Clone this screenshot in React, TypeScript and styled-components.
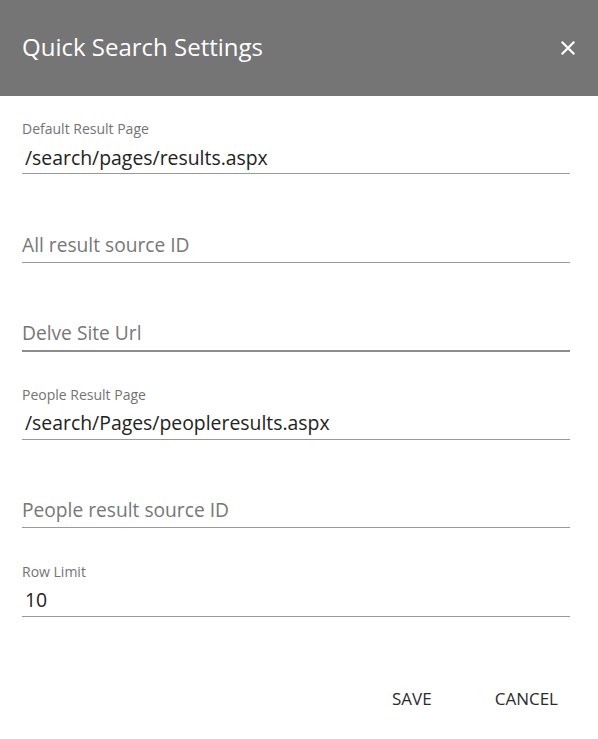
import { FC } from "react";
import styled, { createGlobalStyle } from "styled-components";

const GlobalStyle = createGlobalStyle`
  html, body {
    margin: 0;
    padding: 0;
    background: #fff;
  }
  body {
    font-family: "Open Sans", "Liberation Sans", sans-serif;
  }
`

const Dialog = styled.div`
  width: 598px;
  height: 739px;
  display: flex;
  flex-direction: column;
  background: #fff;
`

const Header = styled.div`
  height: 96px;
  flex-shrink: 0;
  background-color: #757575;
  display: flex;
  align-items: center;
  justify-content: space-between;
  padding: 0 20px 0 22px;
  box-sizing: border-box;

  h2 {
    margin: 0;
    font-size: 24px;
    font-weight: 400;
    color: #fff;
    line-height: 1;
    padding-bottom: 2px;
  }
`

const CloseButton = styled.button`
  background: transparent;
  border: none;
  padding: 0;
  width: 20px;
  height: 20px;
  display: flex;
  align-items: center;
  justify-content: center;
  cursor: pointer;
`

const Body = styled.div`
  padding: 24px 28px 0 22px;
  display: flex;
  flex-direction: column;
`

const Field = styled.div<{ $focused?: boolean }>`
  height: 88.6px;
  display: flex;
  flex-direction: column;
  justify-content: flex-start;

  .line {
    border-bottom: ${(p) => (p.$focused ? "2px solid #8c8c8c" : "1px solid #999")};
  }
`

const Label = styled.label`
  display: block;
  height: 18px;
  font-size: 14px;
  line-height: 18px;
  color: #737373;
`

const Input = styled.input`
  display: block;
  width: 100%;
  box-sizing: border-box;
  border: none;
  outline: none;
  background: transparent;
  height: 35px;
  padding: 3px 0 0 3px;
  font-family: "Open Sans", "Liberation Sans", sans-serif;
  font-size: 19.4px;
  color: #222;

  &::placeholder {
    color: #777;
    opacity: 1;
  }
`

const EmptyInput = styled(Input)`
  padding: 0;
  font-size: 19.2px;
`

const Footer = styled.div`
  display: flex;
  justify-content: flex-end;
  align-items: flex-start;
  padding: 29px 28px 0 0;
  gap: 39px;
`

const FlatButton = styled.button`
  background: transparent;
  border: none;
  padding: 6px 12px;
  font-family: "Open Sans", "Liberation Sans", sans-serif;
  font-size: 17px;
  color: #2b2b2b;
  text-transform: uppercase;
  cursor: pointer;
`

interface FieldDef {
    label: string
    value?: string
    focused?: boolean
}

const fields: FieldDef[] = [
    {label: "Default Result Page", value: "/search/pages/results.aspx"},
    {label: "All result source ID"},
    {label: "Delve Site Url", focused: true},
    {label: "People Result Page", value: "/search/Pages/peopleresults.aspx"},
    {label: "People result source ID"},
    {label: "Row Limit", value: "10"},
]

const App: FC = () => {
    return (
        <Dialog>
            <GlobalStyle/>
            <Header>
                <h2>Quick Search Settings</h2>
                <CloseButton aria-label="close">
                    <svg width="14" height="14" viewBox="0 0 14 14">
                        <path d="M1.5 1.5 L12.5 12.5 M12.5 1.5 L1.5 12.5" stroke="#fff" strokeWidth="2.2" strokeLinecap="square"/>
                    </svg>
                </CloseButton>
            </Header>
            <Body>
                {fields.map((f) => (
                    <Field key={f.label} $focused={f.focused}>
                        {f.value !== undefined ? (
                            <>
                                <Label>{f.label}</Label>
                                <div className="line">
                                    <Input defaultValue={f.value}/>
                                </div>
                            </>
                        ) : (
                            <>
                                <Label/>
                                <div className="line">
                                    <EmptyInput placeholder={f.label}/>
                                </div>
                            </>
                        )}
                    </Field>
                ))}
            </Body>
            <Footer>
                <FlatButton>Save</FlatButton>
                <FlatButton>Cancel</FlatButton>
            </Footer>
        </Dialog>
    )
}

export default App
